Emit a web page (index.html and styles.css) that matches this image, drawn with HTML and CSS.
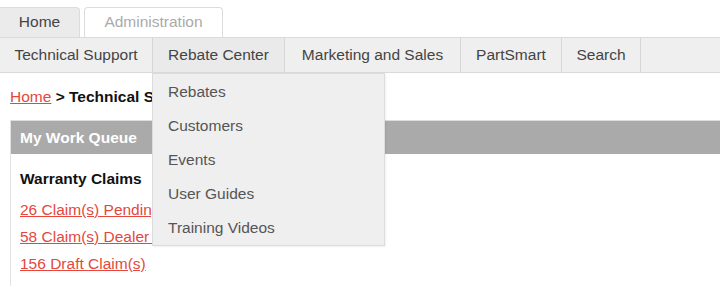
FILE: index.html
```html
<!DOCTYPE html>
<html>
<head>
<meta charset="utf-8">
<link rel="stylesheet" href="styles.css">
</head>
<body>
<div class="tabs">
  <div class="tab tab-active">Home</div>
  <div class="tab tab-admin">Administration</div>
</div>
<nav class="nav">
  <div class="nav-item w-tech">Technical Support</div>
  <div class="nav-item nav-open w-rebate">Rebate Center
    <div class="dropdown">
      <div class="dd-item">Rebates</div>
      <div class="dd-item">Customers</div>
      <div class="dd-item">Events</div>
      <div class="dd-item">User Guides</div>
      <div class="dd-item">Training Videos</div>
    </div>
  </div>
  <div class="nav-item w-mkt">Marketing and Sales</div>
  <div class="nav-item w-part">PartSmart</div>
  <div class="nav-item w-search">Search</div>
  <div class="nav-item nav-fill"></div>
</nav>
<main class="content">
  <div class="crumbs"><a class="link" href="#">Home</a> <b>&gt; Technical Support</b></div>
  <section class="panel">
    <div class="panel-head">My Work Queue</div>
    <div class="panel-body">
      <div class="group-title">Warranty Claims</div>
      <a class="link claim" href="#">26 Claim(s) Pending Review</a>
      <a class="link claim" href="#">58 Claim(s) Dealer Action Required</a>
      <a class="link claim" href="#">156 Draft Claim(s)</a>
    </div>
  </section>
</main>
</body>
</html>
```
FILE: styles.css
```css
* { box-sizing: border-box; }
html, body { margin: 0; padding: 0; background: #fff; }
body {
  font-family: "Liberation Sans", Arial, sans-serif;
  font-size: 15.5px;
  color: #222;
  width: 720px;
  height: 287px;
  overflow: hidden;
}
.tabs {
  height: 37px;
  display: flex;
  align-items: flex-end;
  gap: 4px;
}
.tab {
  height: 30px;
  line-height: 28px;
  text-align: center;
  border: 1px solid #dcdcdc;
  border-bottom: none;
  border-radius: 4px 4px 0 0;
  font-size: 15.5px;
}
.tab-active {
  width: 80px;
  background: #ebebeb;
  color: #444;
  border-left: none;
  border-radius: 0 4px 0 0;
}
.tab-admin {
  width: 139px;
  background: #fff;
  color: #aaa;
}
.nav {
  height: 36px;
  display: flex;
  background: #efefef;
  border-top: 1px solid #dadada;
  border-bottom: 1px solid #dadada;
}
.nav-item {
  position: relative;
  height: 100%;
  line-height: 34px;
  text-align: center;
  color: #444;
  border-right: 1px solid #d6d6d6;
  font-size: 15.5px;
}
.w-tech { width: 153px; }
.w-rebate { width: 132px; }
.w-mkt { width: 176px; }
.w-part { width: 101px; }
.w-search { width: 79px; }
.nav-fill { flex: 1; border-right: none; }
.nav-open { background: #eaeaea; }
.dropdown {
  position: absolute;
  top: 35px;
  left: -1px;
  width: 233px;
  padding: 1px 0 0;
  background: #efefef;
  border: 1px solid #dcdcdc;
  box-shadow: 1px 1px 2px rgba(0,0,0,0.06);
  text-align: left;
  z-index: 5;
}
.dd-item {
  height: 34px;
  line-height: 34px;
  padding-left: 15px;
  color: #555;
  font-size: 15.5px;
}
.content { padding: 0 0 0 10px; }
.crumbs {
  margin-top: 14px;
  height: 20px;
  line-height: 20px;
  font-size: 15.5px;
}
.crumbs b { color: #111; }
.link { color: #e5473d; text-decoration: underline; }
.panel {
  margin-top: 13px;
  border-left: 1px solid #e2e2e2;
  height: 166px;
}
.panel-head {
  height: 34px;
  line-height: 34px;
  background: #aaa;
  color: #fff;
  font-weight: bold;
  font-size: 15.5px;
  padding-left: 9px;
  border-top: 1px solid #ddd;
}
.panel-body { padding: 15px 0 0 9px; }
.group-title {
  height: 20px;
  line-height: 20px;
  font-weight: bold;
  font-size: 15.5px;
  color: #111;
  margin-bottom: 7px;
}
.claim {
  display: block;
  height: 27px;
  line-height: 27px;
  font-size: 15.5px;
  white-space: nowrap;
}
```
